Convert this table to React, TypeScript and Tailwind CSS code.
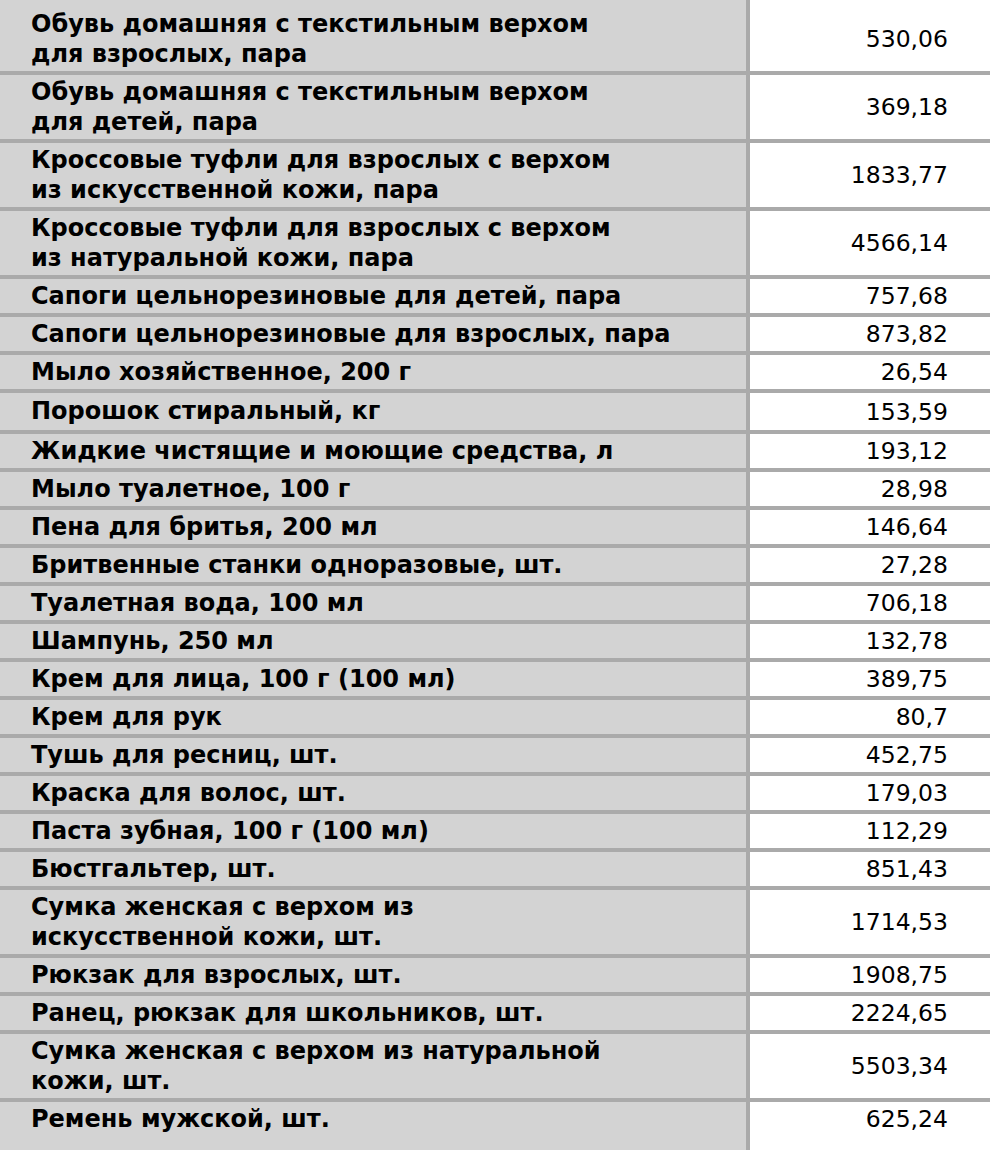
import React from "react";

type Row = { name: string[]; value: string };

const rows: Row[] = [
  { name: ["Обувь домашняя с текстильным верхом", "для взрослых, пара"], value: "530,06" },
  { name: ["Обувь домашняя с текстильным верхом", "для детей, пара"], value: "369,18" },
  { name: ["Кроссовые туфли для взрослых с верхом", "из искусственной кожи, пара"], value: "1833,77" },
  { name: ["Кроссовые туфли для взрослых с верхом", "из натуральной кожи, пара"], value: "4566,14" },
  { name: ["Сапоги цельнорезиновые для детей, пара"], value: "757,68" },
  { name: ["Сапоги цельнорезиновые для взрослых, пара"], value: "873,82" },
  { name: ["Мыло хозяйственное, 200 г"], value: "26,54" },
  { name: ["Порошок стиральный, кг"], value: "153,59" },
  { name: ["Жидкие чистящие и моющие средства, л"], value: "193,12" },
  { name: ["Мыло туалетное, 100 г"], value: "28,98" },
  { name: ["Пена для бритья, 200 мл"], value: "146,64" },
  { name: ["Бритвенные станки одноразовые, шт."], value: "27,28" },
  { name: ["Туалетная вода, 100 мл"], value: "706,18" },
  { name: ["Шампунь, 250 мл"], value: "132,78" },
  { name: ["Крем для лица, 100 г (100 мл)"], value: "389,75" },
  { name: ["Крем для рук"], value: "80,7" },
  { name: ["Тушь для ресниц, шт."], value: "452,75" },
  { name: ["Краска для волос, шт."], value: "179,03" },
  { name: ["Паста зубная, 100 г (100 мл)"], value: "112,29" },
  { name: ["Бюстгальтер, шт."], value: "851,43" },
  { name: ["Сумка женская с верхом из", "искусственной кожи, шт."], value: "1714,53" },
  { name: ["Рюкзак для взрослых, шт."], value: "1908,75" },
  { name: ["Ранец, рюкзак для школьников, шт."], value: "2224,65" },
  { name: ["Сумка женская с верхом из натуральной", "кожи, шт."], value: "5503,34" },
  { name: ["Ремень мужской, шт."], value: "625,24" },
];

export default function App() {
  return (
    <div
      className="w-[990px] h-[1150px] overflow-hidden bg-white text-black"
      style={{ fontFamily: '"DejaVu Sans", Verdana, sans-serif' }}
    >
      {rows.map((r, i) => {
        const first = i === 0;
        const last = i === rows.length - 1;
        const tall = i === 7;
        return (
          <div
            key={i}
            className={
              "flex " +
              (last ? "h-[60px] items-start" : "items-stretch border-b-[4px] border-[#aaaaaa]")
            }
          >
            <div
              className={
                "w-[750px] shrink-0 bg-[#d3d3d3] border-r-[4px] border-[#aaaaaa] pl-[31px] font-bold text-[24px] leading-[30px] " +
                (first ? "pt-[9px]" : tall ? "pt-[3px]" : "pt-[2px]") +
                (tall ? " pb-[4px]" : " pb-[2px]") +
                (last ? " h-full" : "")
              }
            >
              {r.name.map((l, j) => (
                <div key={j} className="whitespace-nowrap">
                  {l}
                </div>
              ))}
            </div>
            <div
              className={
                "flex-1 flex justify-end pr-[42px] text-[23.5px] leading-[30px] " +
                (last ? "pt-[2px]" : "items-center " + (first ? "pt-[7px]" : ""))
              }
            >
              {r.value}
            </div>
          </div>
        );
      })}
    </div>
  );
}
